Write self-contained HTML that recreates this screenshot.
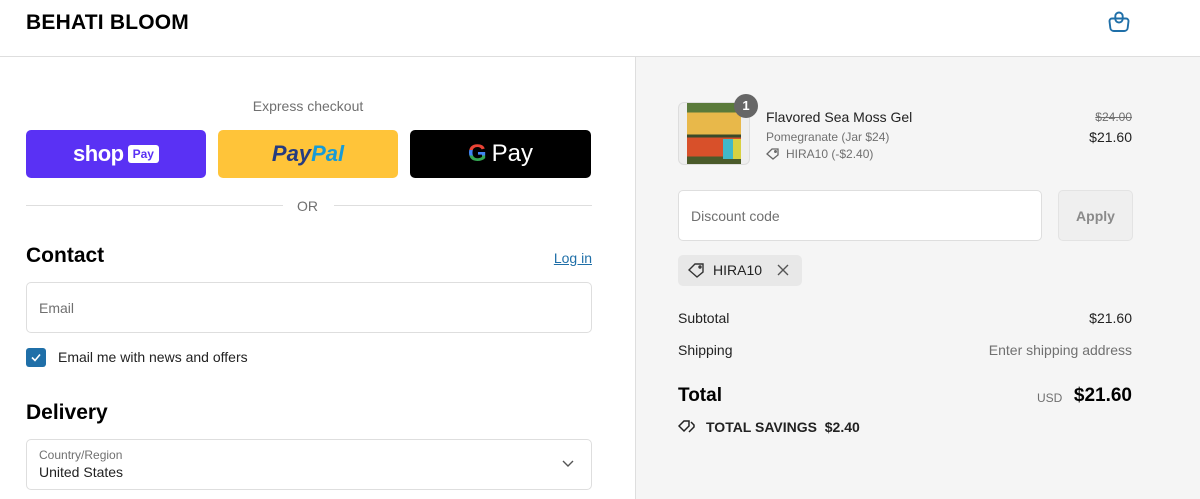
<!DOCTYPE html>
<html><head><meta charset="utf-8"><style>
*{box-sizing:border-box;margin:0;padding:0}
body{width:1200px;height:499px;overflow:hidden;font-family:"Liberation Sans",sans-serif;color:#000;background:#fff;position:relative}
.abs{position:absolute}
.hdr{left:0;top:0;width:1200px;height:57px;border-bottom:1px solid #dedede}
.right{left:635px;top:57px;width:565px;height:442px;background:#f5f5f5;border-left:1px solid #dedede}
.btn{top:130px;height:48px;border-radius:5px;display:flex;align-items:center;justify-content:center}
.inp{border:1px solid #dedede;border-radius:5px;background:#fff}
.gray{color:#707070}
.r{text-align:right}
</style></head><body>
<div class="abs hdr"></div>
<div class="abs" style="left:26px;top:11px;font-size:21px;font-weight:bold;letter-spacing:0.2px">BEHATI BLOOM</div>
<svg class="abs" style="left:1107px;top:10px" width="24" height="24" viewBox="0 0 24 24" fill="none" stroke="#1f6fa8" stroke-width="1.9"><path d="M5 8.5h14a2.5 2.5 0 0 1 2.5 2.8l-0.8 6.5a3.5 3.5 0 0 1-3.5 3.2H6.8a3.5 3.5 0 0 1-3.5-3.2l-0.8-6.5A2.5 2.5 0 0 1 5 8.5z"/><rect x="8.3" y="2.5" width="7.4" height="10" rx="3.7"/></svg>

<div class="abs gray" style="left:0;width:616px;top:98px;text-align:center;font-size:14px">Express checkout</div>
<div class="abs btn" style="left:26px;width:180px;background:#5a31f4;color:#fff"><span style="font-size:22px;font-weight:bold;letter-spacing:-0.5px">shop</span><span style="background:#fff;color:#5a31f4;font-size:12px;font-weight:bold;border-radius:3px;padding:2px 5px;margin-left:4px">Pay</span></div>
<div class="abs btn" style="left:218px;width:180px;background:#ffc439"><span style="font-size:22px;font-weight:bold;font-style:italic;color:#253b80">Pay</span><span style="font-size:22px;font-weight:bold;font-style:italic;color:#179bd7">Pal</span></div>
<div class="abs btn" style="left:410px;width:181px;background:#000;color:#fff;font-size:24px"><span style="font-weight:bold;background:linear-gradient(#ea4335 0 35%,#4285f4 35% 55%,#34a853 55%);-webkit-background-clip:text;color:transparent;margin-right:5px">G</span>Pay</div>
<div class="abs" style="left:26px;top:205px;width:257px;border-top:1px solid #dedede"></div>
<div class="abs" style="left:334px;top:205px;width:258px;border-top:1px solid #dedede"></div>
<div class="abs gray" style="left:297px;top:198px;font-size:14px">OR</div>

<div class="abs" style="left:26px;top:244px;font-size:21px;font-weight:bold">Contact</div>
<div class="abs r" style="left:500px;width:92px;top:250px;font-size:14px;color:#1f6fa8;text-decoration:underline">Log in</div>
<div class="abs inp" style="left:26px;top:282px;width:566px;height:51px"></div>
<div class="abs gray" style="left:39px;top:300px;font-size:14px">Email</div>
<div class="abs" style="left:26px;top:348px;width:20px;height:19px;background:#1f6fa8;border-radius:3px"><svg width="20" height="19" viewBox="0 0 20 19"><path d="M6 9.5l3 3 5-6" stroke="#fff" stroke-width="1.6" fill="none"/></svg></div>
<div class="abs" style="left:58px;top:349px;font-size:14px;color:#222">Email me with news and offers</div>
<div class="abs" style="left:26px;top:401px;font-size:21px;font-weight:bold">Delivery</div>
<div class="abs inp" style="left:26px;top:439px;width:566px;height:51px"></div>
<div class="abs gray" style="left:39px;top:448px;font-size:12px">Country/Region</div>
<div class="abs" style="left:39px;top:464px;font-size:14px;color:#222">United States</div>
<svg class="abs" style="left:562px;top:460px" width="12" height="8"><path d="M1 1l5 5 5-5" stroke="#555" stroke-width="1.4" fill="none"/></svg>

<div class="abs right"></div>
<div class="abs" style="left:678px;top:102px;width:72px;height:63px;border:1px solid #ddd;border-radius:6px;background:#eee;overflow:hidden">
<div style="position:absolute;left:8px;top:0;width:54px;height:63px;background:linear-gradient(#5a7a3a 0 15%,#e8b84a 15% 50%,#3a4a2a 50% 55%,#d8502a 55% 85%,#4a5a2a 85%)"></div>
<div style="position:absolute;left:44px;top:36px;width:10px;height:20px;background:#40b8c8"></div>
<div style="position:absolute;left:54px;top:36px;width:8px;height:20px;background:#d8d040"></div>
</div>
<div class="abs" style="left:734px;top:94px;width:24px;height:24px;border-radius:12px;background:#666;color:#fff;font-size:13px;font-weight:bold;text-align:center;line-height:24px">1</div>
<div class="abs" style="left:766px;top:109px;font-size:14px;color:#222">Flavored Sea Moss Gel</div>
<div class="abs gray" style="left:766px;top:130px;font-size:12px">Pomegranate (Jar $24)</div>
<svg class="abs" style="left:766px;top:148px" width="14" height="12" viewBox="0 0 14 12" fill="none" stroke="#666" stroke-width="1.3"><path d="M1 6l5-5h6v6l-5 4z"/><circle cx="9.5" cy="3.5" r="0.8"/></svg>
<div class="abs gray" style="left:786px;top:147px;font-size:12px">HIRA10 (-$2.40)</div>
<div class="abs gray r" style="left:1032px;width:100px;top:110px;font-size:12px;text-decoration:line-through">$24.00</div>
<div class="abs r" style="left:1032px;width:100px;top:129px;font-size:14px;color:#222">$21.60</div>
<div class="abs inp" style="left:678px;top:190px;width:364px;height:51px"></div>
<div class="abs gray" style="left:691px;top:208px;font-size:14px">Discount code</div>
<div class="abs" style="left:1058px;top:190px;width:75px;height:51px;border:1px solid #e3e3e3;border-radius:5px;background:#efefef;color:#8a8a8a;font-size:14px;font-weight:bold;text-align:center;line-height:50px">Apply</div>
<div class="abs" style="left:678px;top:255px;width:124px;height:31px;border-radius:5px;background:#e8e8e8"></div>
<svg class="abs" style="left:688px;top:262px" width="18" height="16" viewBox="0 0 18 16" fill="none" stroke="#333" stroke-width="1.4"><path d="M1 8l6-6h8v8l-6 5z"/><circle cx="12" cy="5" r="1"/></svg>
<div class="abs" style="left:713px;top:262px;font-size:14px;color:#222">HIRA10</div>
<svg class="abs" style="left:777px;top:264px" width="12" height="12"><path d="M1 1l10 10M11 1L1 11" stroke="#555" stroke-width="1.4"/></svg>
<div class="abs" style="left:678px;top:310px;font-size:14px;color:#222">Subtotal</div>
<div class="abs r" style="left:1032px;width:100px;top:310px;font-size:14px;color:#222">$21.60</div>
<div class="abs" style="left:678px;top:342px;font-size:14px;color:#222">Shipping</div>
<div class="abs gray r" style="left:900px;width:232px;top:342px;font-size:14px">Enter shipping address</div>
<div class="abs" style="left:678px;top:385px;font-size:19px;font-weight:bold">Total</div>
<div class="abs gray" style="left:1037px;top:391px;font-size:12px">USD</div>
<div class="abs r" style="left:1032px;width:100px;top:385px;font-size:19px;font-weight:bold">$21.60</div>
<svg class="abs" style="left:678px;top:419px" width="20" height="14" viewBox="0 0 20 14" fill="none" stroke="#222" stroke-width="1.5"><path d="M1 7l5-5h5v5l-5 5z"/><path d="M13 3l3 3v2l-5 5"/></svg>
<div class="abs" style="left:706px;top:419px;font-size:14px;font-weight:bold;color:#222">TOTAL SAVINGS&nbsp; $2.40</div>
</body></html>
